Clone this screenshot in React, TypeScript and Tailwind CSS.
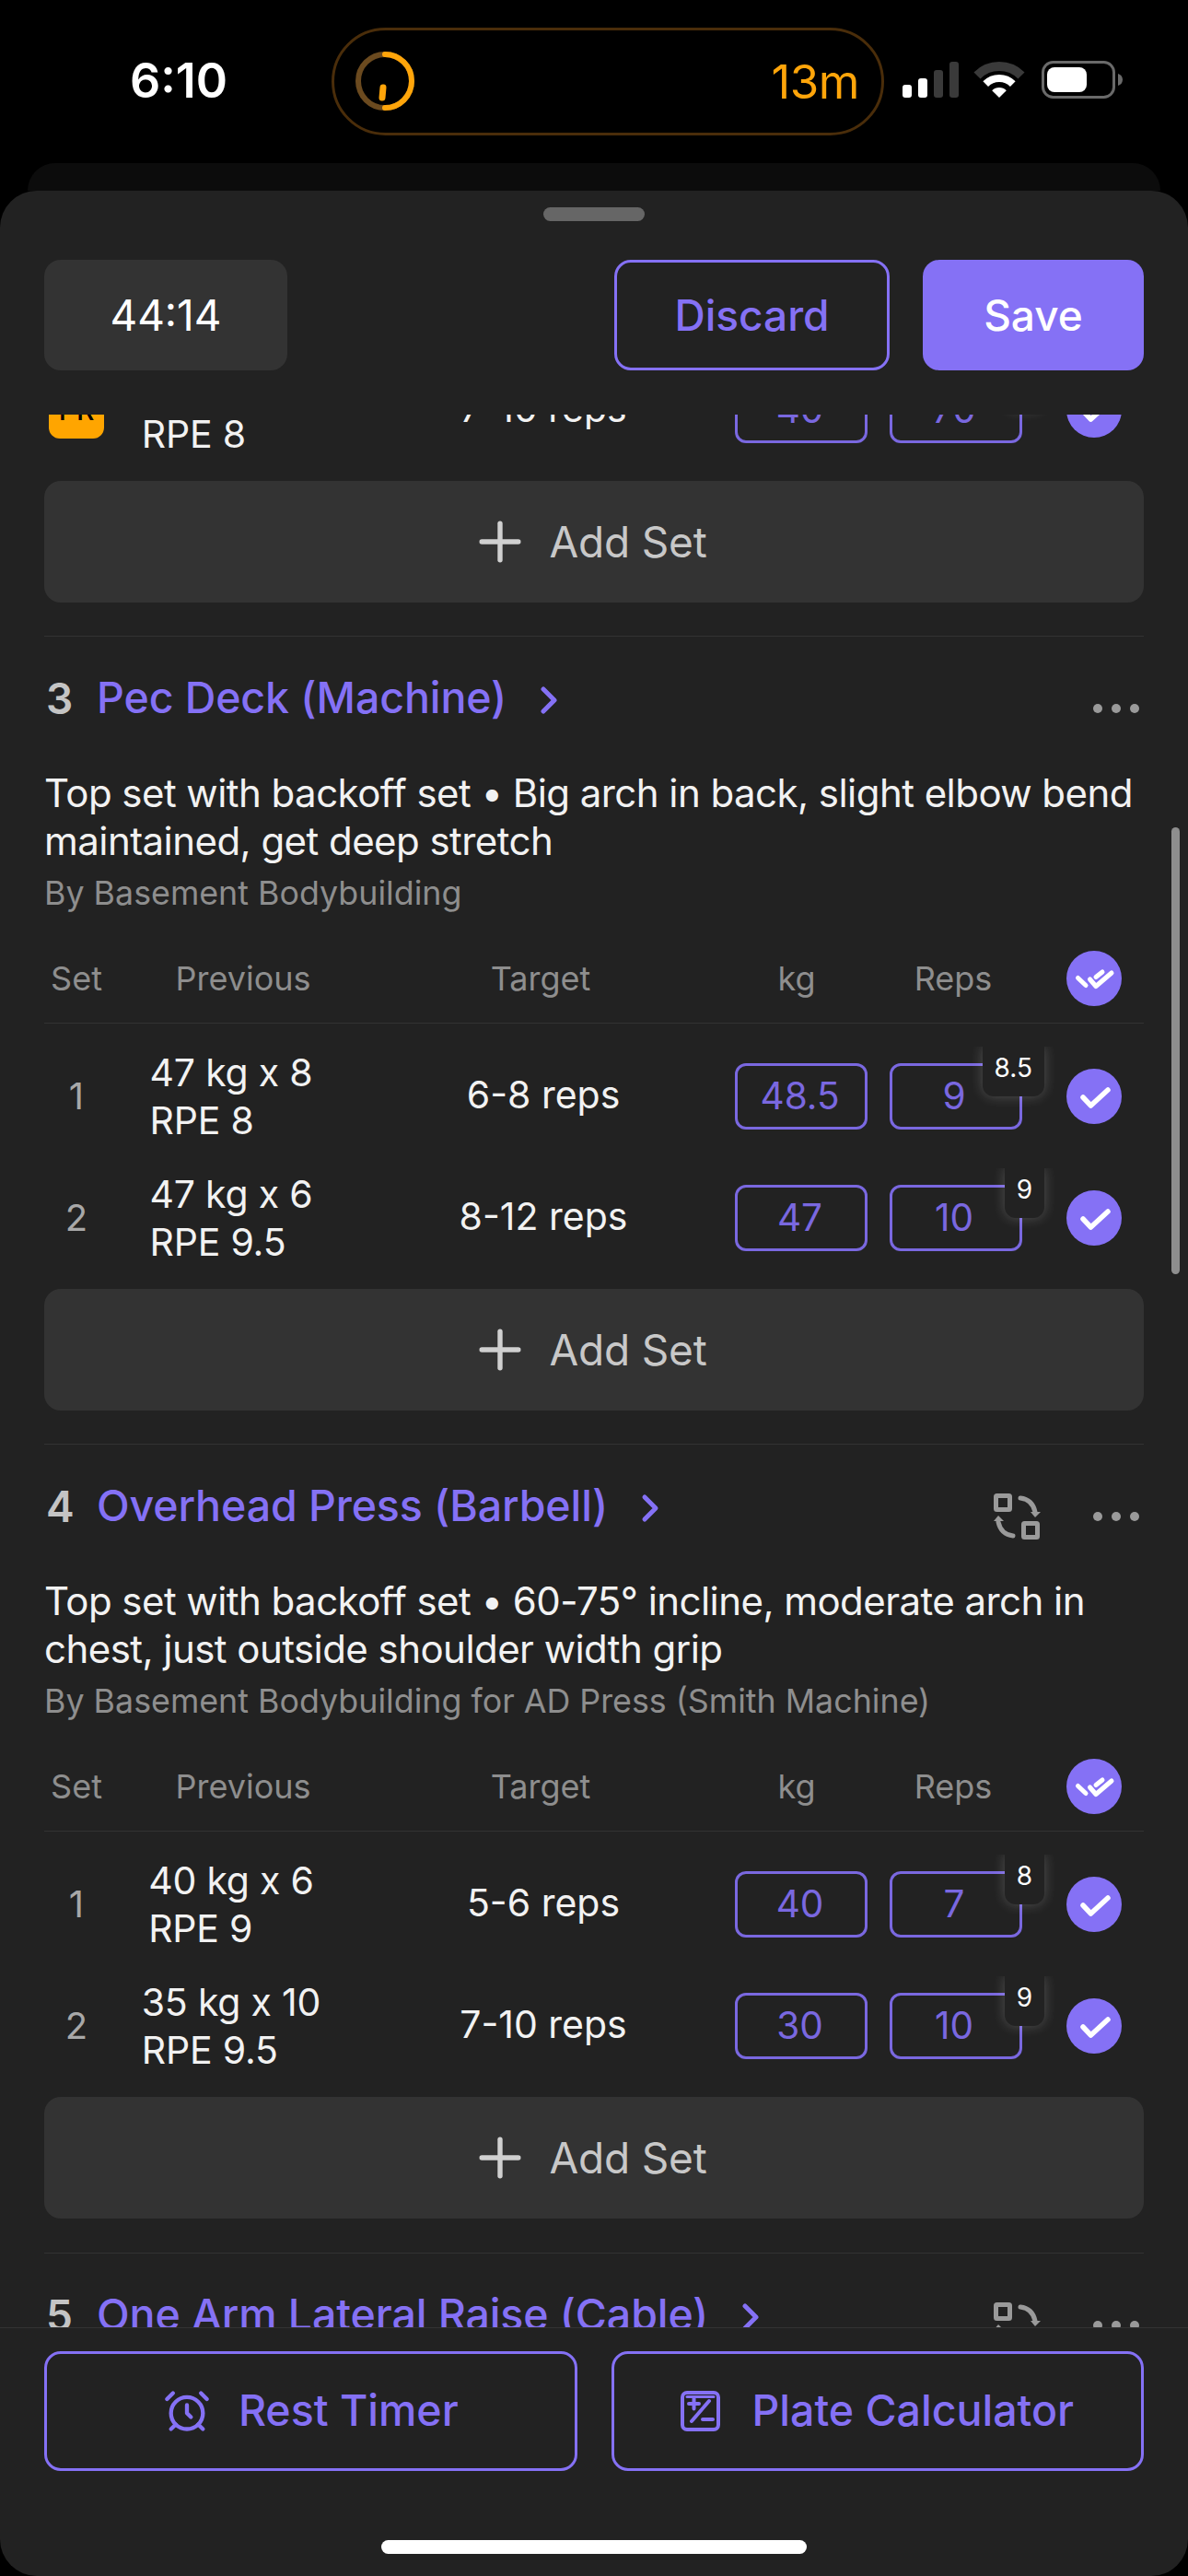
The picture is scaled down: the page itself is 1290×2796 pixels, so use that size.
import {AlarmClock, ChevronRight, Plus} from "lucide-react";

type SetRow = { id: number, prevTop: string, prevBottom: string, target: string, kg: string, reps: string, rpe: string, pr?: boolean }

function CheckCircle() {
    return (
        <div className="flex h-[60px] w-[60px] shrink-0 items-center justify-center rounded-full bg-[#8571f5]">
            <svg width="60" height="60" viewBox="0 0 60 60" fill="none" stroke="white" strokeWidth="5.5" strokeLinecap="round" strokeLinejoin="round">
                <path d="M18 31l8.5 9L45 23"/>
            </svg>
        </div>
    )
}

function CheckAllCircle() {
    return (
        <div className="flex h-[60px] w-[60px] shrink-0 items-center justify-center rounded-full bg-[#8571f5]">
            <svg width="60" height="60" viewBox="0 0 60 60" fill="none" stroke="white" strokeWidth="5" strokeLinecap="round" strokeLinejoin="round">
                <path d="M12.5 29.5l8.5 8"/>
                <path d="M25.5 31l6.5 7.5 17-14.5"/>
                <path d="M32 28.5l7-5.5"/>
            </svg>
        </div>
    )
}

function SwapIcon() {
    return (
        <svg width="51" height="50" viewBox="0 0 51 50" fill="none" stroke="#9a9a9a" strokeWidth="5" strokeLinecap="round" strokeLinejoin="round">
            <rect x="2.5" y="2.5" width="15" height="15" rx="1"/>
            <rect x="32.5" y="32.5" width="15" height="15" rx="1"/>
            <path d="M29 5c9 1 14 6 16 15"/>
            <path d="M21 46c-9-1-14-6-16-15"/>
            <path d="M40 20h11l-6 6z" fill="#9a9a9a" stroke="none"/>
            <path d="M0 30h11L5 24z" fill="#9a9a9a" stroke="none"/>
        </svg>
    )
}

function PlateIcon() {
    return (
        <svg width="43" height="44" viewBox="0 0 43 44" fill="none" stroke="#8571f5" strokeWidth="4" strokeLinecap="round">
            <rect x="2" y="2" width="39" height="40" rx="5"/>
            <path d="M7 6.500h29" strokeWidth="3"/>
            <path d="M9 14h11M14.500 8.500v11"/>
            <path d="M31 11L12 33"/>
            <path d="M24 31h11"/>
        </svg>
    )
}

function Row({row}: { row: SetRow }) {
    return (
        <div className="flex h-[132px] items-center">
            <div className="flex w-[70px] shrink-0 justify-center text-[40px] text-[#a8a8a8]">
                {row.pr ? (
                    <span className="flex h-[62px] w-[60px] items-center justify-center rounded-[12px] bg-[#ffa500] text-[30px] font-medium text-black">PR</span>
                ) : row.id}
            </div>
            <div className="flex w-[266px] shrink-0 justify-center">
                <div className="text-[41px] leading-[52px] tracking-[-0.2px] text-[#f2f2f2]">
                    <div>{row.prevTop}</div>
                    <div>{row.prevBottom}</div>
                </div>
            </div>
            <div className="-mt-[2px] w-[406px] shrink-0 pl-[6px] text-center text-[41px] text-[#f2f2f2]">{row.target}</div>
            <div className="ml-[8px] flex h-[72px] w-[144px] shrink-0 items-center justify-center rounded-[12px] border-[3px] border-[#7a68e0] pr-[3px] text-[40.500px] text-[#7a68e0]">{row.kg}</div>
            <div className="relative ml-[24px] flex h-[72px] w-[144px] shrink-0 items-center justify-center rounded-[12px] border-[3px] border-[#7a68e0] pr-[4px] text-[40.500px] text-[#7a68e0]">
                {row.reps}
                <span className="absolute -top-[21px] -right-[27px] flex h-[54px] min-w-[43px] items-center justify-center rounded-b-[12px] bg-[#222222] px-[13px] pb-[8px] text-[28px] text-white shadow-[0_0_14px_rgba(255,255,255,0.22)] [clip-path:inset(0_-20px_-20px_-20px)]">{row.rpe}</span>
            </div>
            <div className="ml-[48px]">
                <CheckCircle/>
            </div>
        </div>
    )
}

function AddSet() {
    return (
        <div className="mt-[11px] flex h-[132px] items-center justify-center gap-[20px] rounded-[18px] bg-[#333333] pr-[14px] text-[46px] text-[#c8c8c8]">
            <Plus size={68} strokeWidth={1.9} className="text-[#d0d0d0]"/>
            <span className="tracking-[-0.2px]">Add Set</span>
        </div>
    )
}

function Section({num, title, swap, desc, by, rows, height}: { num: number, title: string, swap?: boolean, desc: string, by: string, rows: SetRow[], height: string }) {
    return (
        <div className={height + " border-b border-[#333333] pt-[34px]"}>
            <div className="flex h-[66px] items-center">
                <span className="w-[57px] shrink-0 pl-[2px] text-[46px] font-semibold text-[#c4c4c4]">{num}</span>
                <span className="text-[46.500px] font-medium tracking-[-0.1px] text-[#8571f5]">{title}</span>
                <ChevronRight size={48} strokeWidth={2.5} className="ml-[22px] mt-[4px] text-[#8571f5]"/>
                <div className="ml-auto mr-[5px] mt-[22px] flex items-center gap-[57px]">
                    {swap ? <SwapIcon/> : null}
                    <div className="flex gap-[10px]">
                        <span className="h-[10px] w-[10px] rounded-full bg-[#9a9a9a]"/>
                        <span className="h-[10px] w-[10px] rounded-full bg-[#9a9a9a]"/>
                        <span className="h-[10px] w-[10px] rounded-full bg-[#9a9a9a]"/>
                    </div>
                </div>
            </div>
            <p className="mt-[44px] text-[42px] leading-[52px] tracking-[-0.55px] text-[#f2f2f2]">{desc}</p>
            <p className="mt-[8px] text-[35.800px] leading-[44px] text-[#8e8e8e]">{by}</p>
            <div className="mt-[41px] flex h-[60px] items-center text-[36px] text-[#8e8e8e]">
                <span className="w-[70px] text-center">Set</span>
                <span className="w-[266px] pl-[26px] text-center">Previous</span>
                <span className="w-[406px] text-center">Target</span>
                <span className="ml-[8px] w-[144px] pr-[10px] text-center">kg</span>
                <span className="ml-[24px] w-[144px] pr-[6px] text-center">Reps</span>
                <div className="ml-[48px]">
                    <CheckAllCircle/>
                </div>
            </div>
            <div className="mt-[18px] mb-[13px] border-t border-[#333333]"/>
            {rows.map(row => <Row key={row.id} row={row}/>)}
            <AddSet/>
        </div>
    )
}

export default function App() {
    const sections = [
        {
            num: 3,
            height: 'h-[877px]',
            title: 'Pec Deck (Machine)',
            desc: 'Top set with backoff set • Big arch in back, slight elbow bend maintained, get deep stretch',
            by: 'By Basement Bodybuilding',
            rows: [
                {id: 1, prevTop: '47 kg x 8', prevBottom: 'RPE 8', target: '6-8 reps', kg: '48.5', reps: '9', rpe: '8.5'},
                {id: 2, prevTop: '47 kg x 6', prevBottom: 'RPE 9.5', target: '8-12 reps', kg: '47', reps: '10', rpe: '9'},
            ],
        },
        {
            num: 4,
            height: 'h-[878px]',
            title: 'Overhead Press (Barbell)',
            swap: true,
            desc: 'Top set with backoff set • 60-75° incline, moderate arch in chest, just outside shoulder width grip',
            by: 'By Basement Bodybuilding for AD Press (Smith Machine)',
            rows: [
                {id: 1, prevTop: '40 kg x 6', prevBottom: 'RPE 9', target: '5-6 reps', kg: '40', reps: '7', rpe: '8'},
                {id: 2, prevTop: '35 kg x 10', prevBottom: 'RPE 9.5', target: '7-10 reps', kg: '30', reps: '10', rpe: '9'},
            ],
        },
        {
            num: 5,
            height: 'h-[878px]',
            title: 'One Arm Lateral Raise (Cable)',
            swap: true,
            desc: '',
            by: '',
            rows: [],
        },
    ]

    return (
        <div className="flex h-[2796px] w-[1290px] flex-col overflow-hidden bg-black font-[Inter,sans-serif]">
            {/* status bar */}
            <div className="flex h-[177px] shrink-0 items-start pt-[30px]">
                <span className="ml-[141px] mt-[29px] w-[219px] text-[52px] leading-[58px] font-semibold text-white">6:10</span>
                <div className="flex h-[117px] w-[600px] items-center justify-between rounded-full border-[3px] border-[#4a2d0a] pl-[22px] pr-[24px]">
                    <svg width="66" height="66" viewBox="0 0 66 66" fill="none" className="-mt-[1px]">
                        <circle cx="33" cy="33" r="29" stroke="#6b4a1f" strokeWidth="6"/>
                        <path d="M33 4a29 29 0 0 1 0 58" stroke="#ffa50a" strokeWidth="6" strokeLinecap="round"/>
                        <path d="M31 40l-1 11" stroke="#ffa50a" strokeWidth="7" strokeLinecap="round"/>
                    </svg>
                    <span className="mt-[2px] text-[51px] tracking-[-0.5px] text-[#ffa50a]">13m</span>
                </div>
                <svg width="245" height="60" viewBox="0 0 245 60" fill="none" className="ml-[17px] mt-[30px]">
                    <rect x="3" y="32" width="10" height="14" rx="3" fill="white"/>
                    <rect x="20" y="25" width="10" height="21" rx="3" fill="white"/>
                    <rect x="37" y="16" width="10" height="30" rx="3" fill="#3a3a3a"/>
                    <rect x="54" y="7" width="10" height="39" rx="3" fill="#3a3a3a"/>
                    <g transform="translate(3 0)">
                        <path d="M81 22a34 34 0 0 1 48 0" stroke="#3a3a3a" strokeWidth="10"/>
                        <path d="M90.200 31.200a21 21 0 0 1 29.600 0" stroke="white" strokeWidth="8"/>
                        <path d="M105 46l-7.800-7.800a11 11 0 0 1 15.600 0z" fill="white"/>
                    </g>
                    <rect x="155.500" y="7.500" width="77" height="38" rx="11" stroke="#6a6a6a" strokeWidth="3"/>
                    <rect x="160" y="13" width="43" height="27" rx="8" fill="white"/>
                    <path d="M237 20c3 1 5 3 5 6.500S240 32 237 33z" fill="#6a6a6a"/>
                </svg>
            </div>
            <div className="mx-[30px] h-[30px] shrink-0 rounded-t-[30px] bg-[#0c0c0c]"/>

            {/* sheet */}
            <div className="relative flex min-h-0 flex-1 flex-col rounded-[40px] bg-[#222222]">
                <div className="mx-auto mt-[18px] h-[15px] w-[110px] shrink-0 rounded-full bg-[#666666]"/>
                <div className="mx-[48px] mt-[42px] flex h-[120px] shrink-0 items-center gap-[36px]">
                    <div className="mr-auto flex h-full w-[264px] items-center justify-center rounded-[18px] bg-[#333333] text-[46px] text-white">44:14</div>
                    <div className="flex h-full w-[299px] items-center justify-center rounded-[18px] border-[3px] border-[#8571f5] text-[46px] font-medium text-[#8571f5]">Discard</div>
                    <div className="flex h-full w-[240px] items-center justify-center rounded-[18px] bg-[#8571f5] text-[46px] font-medium text-white">Save</div>
                </div>

                <div className="mt-[48px] min-h-0 flex-1 overflow-hidden px-[48px]">
                    <div className="-mt-[71px]">
                        <Row row={{id: 1, prevTop: '35 kg x 10', prevBottom: 'RPE 8', target: '7-10 reps', kg: '40', reps: '70', rpe: '8', pr: true}}/>
                        <AddSet/>
                        <div className="mt-[36px] border-b border-[#333333]"/>
                        {sections.map(s => <Section key={s.num} {...s}/>)}
                    </div>
                </div>

                <div className="shrink-0 border-t border-[#333333] px-[48px] pt-[25px]">
                    <div className="flex gap-[37px]">
                        <div className="flex h-[130px] flex-1 items-center justify-center gap-[30px] rounded-[18px] border-[3px] border-[#8571f5] text-[46.500px] font-medium text-[#8571f5]">
                            <AlarmClock size={52} strokeWidth={2}/>
                            <span>Rest Timer</span>
                        </div>
                        <div className="flex h-[130px] flex-1 items-center justify-center gap-[34px] rounded-[18px] border-[3px] border-[#8571f5] text-[46.500px] font-medium text-[#8571f5]">
                            <PlateIcon/>
                            <span>Plate Calculator</span>
                        </div>
                    </div>
                    <div className="mx-auto mt-[75px] mb-[24px] h-[15px] w-[462px] rounded-full bg-white"/>
                </div>

                {/* scroll indicator */}
                <div className="absolute top-[691px] left-[1272px] h-[485px] w-[9px] rounded-full bg-[#8e8e8e]"/>
            </div>
        </div>
    )
}
